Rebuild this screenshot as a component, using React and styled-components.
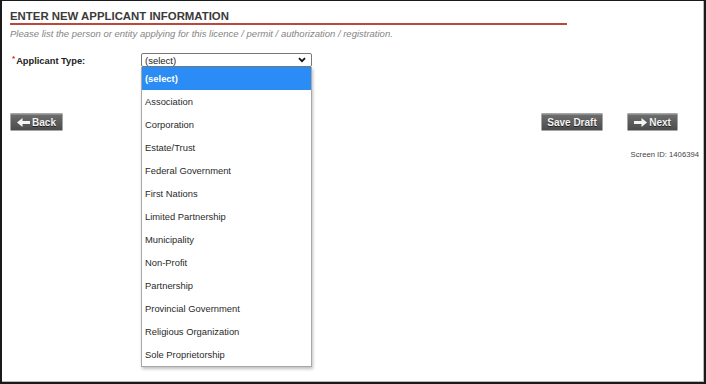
import React from "react";
import styled, { createGlobalStyle } from "styled-components";

const GlobalStyle = createGlobalStyle`
  html, body {
    margin: 0;
    padding: 0;
    background: #fff;
  }
  body {
    font-family: "Liberation Sans", Arial, sans-serif;
    color: #333;
  }
`;

const Frame = styled.div`
  box-sizing: border-box;
  width: 706px;
  height: 384px;
  border-style: solid;
  border-color: #1a1a1a;
  border-width: 1px 2px 2px 2px;
  box-shadow: inset -1px -1px 0 #b8b8b8;
  padding: 9px 8px 0 8px;
  display: flex;
  flex-direction: column;
`;

const Heading = styled.h1`
  margin: 0;
  width: 557px;
  font-size: 11.4px;
  line-height: 13px;
  font-weight: bold;
  color: #3a3a3a;
  border-bottom: 2px solid #b9493c;
`;

const Subtitle = styled.p`
  margin: 3px 0 0;
  font-size: 9.5px;
  line-height: 12px;
  font-style: italic;
  color: #858585;
`;

const FieldRow = styled.div`
  display: flex;
  align-items: center;
  margin-top: 13px;
  height: 14px;
`;

const Label = styled.label`
  width: 131px;
  padding-left: 2px;
  box-sizing: border-box;
  font-size: 9.3px;
  font-weight: bold;
  color: #222;
`;

const Required = styled.sup`
  color: #d22;
  font-size: 8px;
  vertical-align: 3px;
  margin-right: 1px;
`;

const SelectWrap = styled.div`
  position: relative;
  width: 171px;
`;

const SelectBox = styled.div`
  box-sizing: border-box;
  height: 14px;
  border: 1px solid #777;
  border-radius: 2px;
  background: #fff;
  display: flex;
  align-items: center;
  justify-content: space-between;
  padding: 0 5px 0 3px;
  font-size: 9.5px;
  color: #222;
`;

const DropList = styled.ul`
  position: absolute;
  top: 14px;
  left: 0;
  width: 171px;
  box-sizing: border-box;
  margin: 0;
  padding: 0;
  list-style: none;
  background: #fff;
  border: 1px solid #a8a8a8;
  border-top: none;
  box-shadow: 1px 2px 3px rgba(0, 0, 0, 0.25);
  z-index: 2;
`;

const Option = styled.li`
  height: 23px;
  line-height: 24px;
  padding-left: 3px;
  font-size: 9.4px;
  color: ${(p) => (p.$active ? "#fff" : "#2a2a2a")};
  background: ${(p) => (p.$active ? "#2a8cf4" : "transparent")};
  font-weight: ${(p) => (p.$active ? "bold" : "normal")};
`;

const ButtonRow = styled.div`
  display: flex;
  justify-content: space-between;
  align-items: center;
  margin-top: 46px;
  padding: 0 18px 0 0;
`;

const RightGroup = styled.div`
  display: flex;
  gap: 24px;
`;

const Button = styled.button`
  box-sizing: border-box;
  height: 18px;
  width: ${(p) => p.$w}px;
  padding: 0;
  display: flex;
  align-items: center;
  justify-content: center;
  gap: 2px;
  border: 1px solid #a6a6a6;
  border-radius: 1px;
  background: linear-gradient(to bottom, #6e6e6e, #4c4c4c);
  box-shadow: inset 0 1px 0 #8a8a8a;
  color: #f2f2f2;
  font-family: "Liberation Sans", Arial, sans-serif;
  font-size: 10px;
  font-weight: bold;
  text-shadow: 0 1px 0 #222;
`;

const ScreenId = styled.div`
  margin-top: 19px;
  margin-right: -3px;
  text-align: right;
  font-size: 7.7px;
  color: #444;
`;

const Arrow = ({ dir }) => (
  <svg
    width="13"
    height="9"
    viewBox="0 0 13 9"
    style={{ transform: dir === "right" ? "scaleX(-1)" : "none" }}
  >
    <path d="M0 4.5 L5.5 0 L5.5 3 L13 3 L13 6 L5.5 6 L5.5 9 Z" fill="#f4f4f4" />
  </svg>
);

const Chevron = () => (
  <svg width="8" height="6" viewBox="0 0 8 6">
    <path d="M1 1.2 L4 4.2 L7 1.2" fill="none" stroke="#111" strokeWidth="1.8" />
  </svg>
);

const options = [
  "(select)",
  "Association",
  "Corporation",
  "Estate/Trust",
  "Federal Government",
  "First Nations",
  "Limited Partnership",
  "Municipality",
  "Non-Profit",
  "Partnership",
  "Provincial Government",
  "Religious Organization",
  "Sole Proprietorship",
];

export default function App() {
  return (
    <>
      <GlobalStyle />
      <Frame>
        <Heading>ENTER NEW APPLICANT INFORMATION</Heading>
        <Subtitle>
          Please list the person or entity applying for this licence / permit /
          authorization / registration.
        </Subtitle>
        <FieldRow>
          <Label>
            <Required>*</Required>Applicant Type:
          </Label>
          <SelectWrap>
            <SelectBox>
              <span>(select)</span>
              <Chevron />
            </SelectBox>
            <DropList>
              {options.map((o, i) => (
                <Option key={o} $active={i === 0}>
                  {o}
                </Option>
              ))}
            </DropList>
          </SelectWrap>
        </FieldRow>
        <ButtonRow>
          <Button $w={53}>
            <Arrow dir="left" />
            Back
          </Button>
          <RightGroup>
            <Button $w={62}>Save Draft</Button>
            <Button $w={51}>
              <Arrow dir="right" />
              Next
            </Button>
          </RightGroup>
        </ButtonRow>
        <ScreenId>Screen ID: 1406394</ScreenId>
      </Frame>
    </>
  );
}
